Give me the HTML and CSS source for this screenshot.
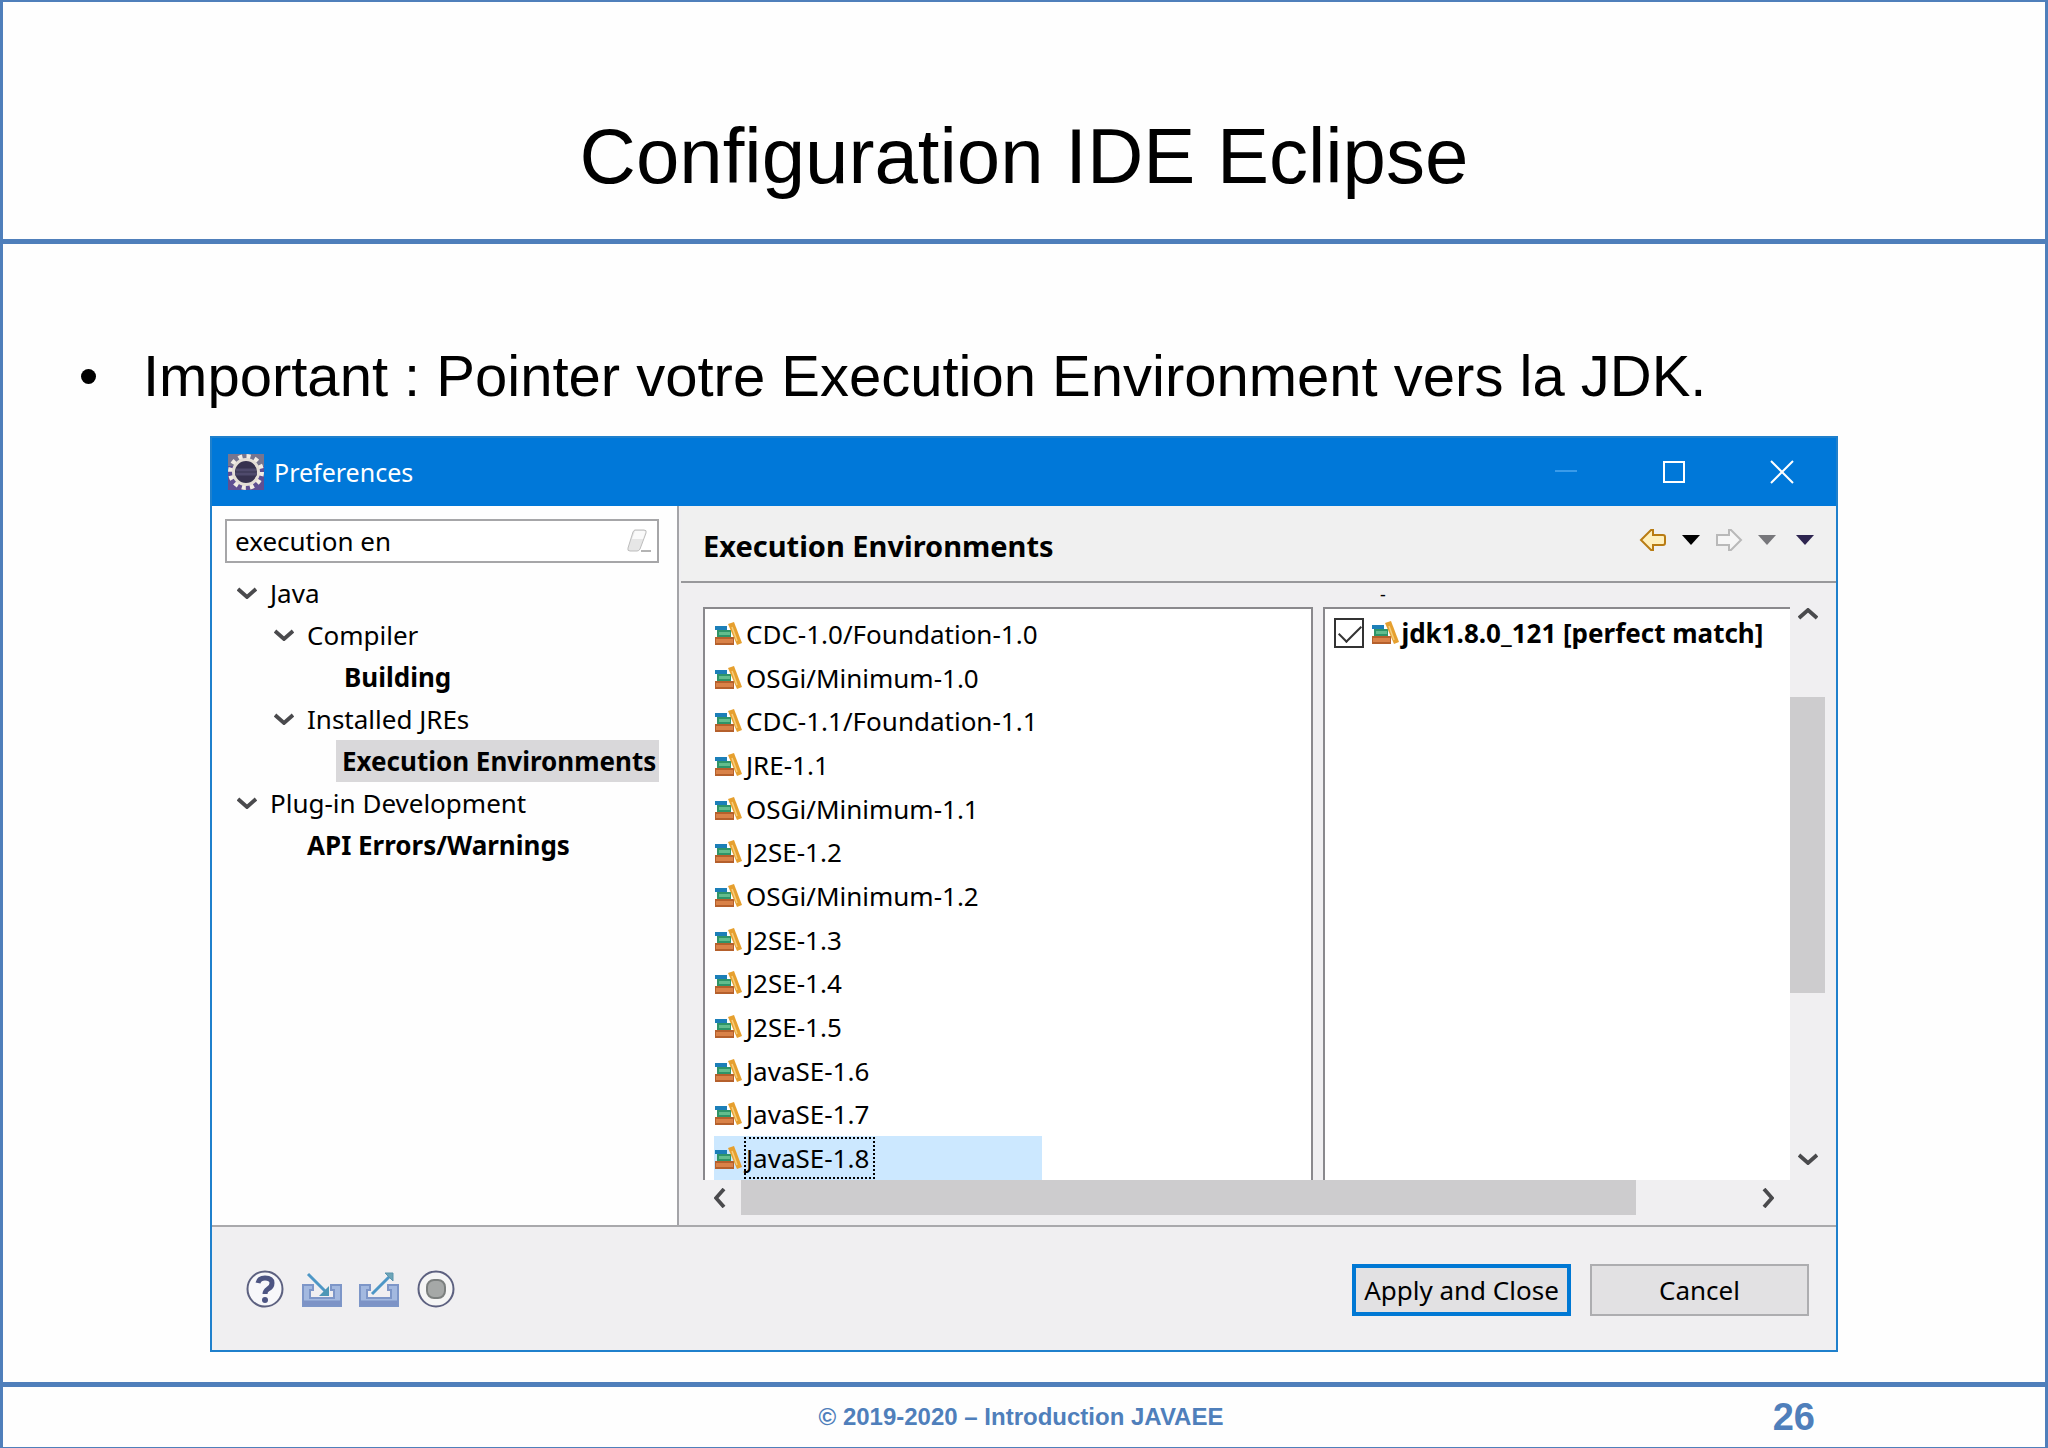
FILE: index.html
```html
<!DOCTYPE html>
<html lang="fr">

<head>
    <meta charset="UTF-8">
    <meta name="viewport" content="width=device-width, initial-scale=1.0">
    <title>Configuration IDE Eclipse</title>
    <link rel="stylesheet" href="styles.css">
</head>

<body>
    <!--Icones partagées-->
    <svg class="sprite" aria-hidden="true">
        <symbol id="books" viewBox="0 0 28 24">
            <path d="M1 4h12v4H1z" fill="#1c7fb8"/>
            <path d="M3 8h14v7H3z" fill="#2f9468"/>
            <path d="M5 10h11v3H5z" fill="#63bd8d"/>
            <path d="M1 15h19v8H1z" fill="#b5602c"/>
            <path d="M2 17h17v4H2z" fill="#d98248"/>
            <path d="M14 2l6-2 8 21-5 2z" fill="#e6a02f"/>
            <path d="M18 5l5 14" stroke="#f6cd7c" stroke-width="1.5"/>
        </symbol>
        <symbol id="chevron" viewBox="0 0 20 12">
            <path d="M1 2l9 8 9-8" fill="none" stroke="#4a4a4d" stroke-width="3.8"/>
        </symbol>
        <symbol id="triangle" viewBox="0 0 18 10">
            <path d="M0 0h18L9 10z" fill="currentColor"/>
        </symbol>
        <symbol id="tray" viewBox="0 0 42 36">
            <path d="M2 13h10v5H9v8h24v-8h-3v-5h10v21H2z" fill="#a3b9e0" stroke="#7d96c8" stroke-width="2"/>
            <path d="M2 31h38" stroke="#7d93c6" stroke-width="5"/>
        </symbol>
    </svg>

    <div class="slide">
        <header class="slide-header">
            <h1>Configuration IDE Eclipse</h1>
        </header>

        <main>
            <ul class="points">
                <li>Important : Pointer votre Execution Environment vers la JDK.</li>
            </ul>

            <section class="dialog" aria-label="Preferences">
                <div class="titlebar">
                    <svg class="logo" viewBox="0 0 36 36">
                        <path d="M0 0h36v36H0z" fill="#5f4f92"/>
                        <path d="M0 0h36v12H0z" fill="#77758f"/>
                        <circle cx="18" cy="18" r="15.5" fill="none" stroke="#f1ece4" stroke-width="5" stroke-dasharray="4 4.12"/>
                        <circle cx="18" cy="18" r="12.5" fill="#37324f" stroke="#e4ded6" stroke-width="3"/>
                        <path d="M8 16h20M7 20h22" stroke="#4f4a6c" stroke-width="3"/>
                    </svg>
                    <span class="name">Preferences</span>
                    <div class="controls">
                        <button type="button" aria-label="Minimize" disabled>
                            <svg viewBox="0 0 24 24"><path d="M1 11h22" stroke="#3a9bea" stroke-width="2"/></svg>
                        </button>
                        <button type="button" aria-label="Maximize">
                            <svg viewBox="0 0 24 24"><path d="M2 2h20v20H2z" fill="none" stroke="#fff" stroke-width="2"/></svg>
                        </button>
                        <button type="button" aria-label="Close">
                            <svg viewBox="0 0 24 24"><path d="M1 1l22 22M23 1L1 23" stroke="#fff" stroke-width="2"/></svg>
                        </button>
                    </div>
                </div>

                <div class="content">
                    <nav class="sidebar">
                        <div class="search">
                            <input type="text" value="execution en" aria-label="Filter">
                            <button type="button" aria-label="Clear">
                                <svg viewBox="0 0 26 24">
                                    <path d="M9 1h9q3 0 2 3l-6 16q-1 2-3 2H4q-3 0-2-3L7 3q1-2 2-2z" fill="#e6e6e6" stroke="#bdbdbd"/>
                                    <path d="M9 2h9q2 0 1 2l-2 6H6z" fill="#fafafa"/>
                                    <path d="M15 22h10" stroke="#b4b4b4" stroke-width="2"/>
                                </svg>
                            </button>
                        </div>
                        <ul class="tree">
                            <li><svg><use href="#chevron"/></svg><span>Java</span></li>
                            <li class="level2"><svg><use href="#chevron"/></svg><span>Compiler</span></li>
                            <li class="level3"><b>Building</b></li>
                            <li class="level2"><svg><use href="#chevron"/></svg><span>Installed JREs</span></li>
                            <li class="level3"><b class="current">Execution Environments</b></li>
                            <li><svg><use href="#chevron"/></svg><span>Plug-in Development</span></li>
                            <li class="level2"><b class="leaf">API Errors/Warnings</b></li>
                        </ul>
                    </nav>

                    <div class="page">
                        <div class="page-header">
                            <h2>Execution Environments</h2>
                            <div class="history">
                                <button type="button" aria-label="Back">
                                    <svg class="arrow" viewBox="0 0 28 24"><path d="M2 12L12 2h2v5h10q2 0 2 2v6q0 2-2 2H14v5h-2z" fill="#fff0bd" stroke="#b97c13" stroke-width="2"/></svg>
                                </button>
                                <button type="button" aria-label="Back history"><svg class="tri"><use href="#triangle"/></svg></button>
                                <button type="button" aria-label="Forward">
                                    <svg class="arrow" viewBox="0 0 28 24"><path d="M26 12L16 2h-2v5H2v10h12v5h2z" fill="#f6f6f6" stroke="#b9b9b9" stroke-width="2"/></svg>
                                </button>
                                <button type="button" aria-label="Forward history"><svg class="tri off"><use href="#triangle"/></svg></button>
                                <button type="button" class="menu" aria-label="Menu"><svg class="tri dark"><use href="#triangle"/></svg></button>
                            </div>
                        </div>

                        <div class="scroller">
                            <div class="view">
                                <span class="cut">-</span>
                                <div class="lists">
                                    <ul class="list environments">
                                        <li><svg><use href="#books"/></svg><span>CDC-1.0/Foundation-1.0</span></li>
                                        <li><svg><use href="#books"/></svg><span>OSGi/Minimum-1.0</span></li>
                                        <li><svg><use href="#books"/></svg><span>CDC-1.1/Foundation-1.1</span></li>
                                        <li><svg><use href="#books"/></svg><span>JRE-1.1</span></li>
                                        <li><svg><use href="#books"/></svg><span>OSGi/Minimum-1.1</span></li>
                                        <li><svg><use href="#books"/></svg><span>J2SE-1.2</span></li>
                                        <li><svg><use href="#books"/></svg><span>OSGi/Minimum-1.2</span></li>
                                        <li><svg><use href="#books"/></svg><span>J2SE-1.3</span></li>
                                        <li><svg><use href="#books"/></svg><span>J2SE-1.4</span></li>
                                        <li><svg><use href="#books"/></svg><span>J2SE-1.5</span></li>
                                        <li><svg><use href="#books"/></svg><span>JavaSE-1.6</span></li>
                                        <li><svg><use href="#books"/></svg><span>JavaSE-1.7</span></li>
                                        <li class="selected"><svg><use href="#books"/></svg><span>JavaSE-1.8</span></li>
                                    </ul>
                                    <div class="list jres">
                                        <label>
                                            <input type="checkbox" checked>
                                            <svg><use href="#books"/></svg>
                                            <b>jdk1.8.0_121 [perfect match]</b>
                                        </label>
                                    </div>
                                </div>
                            </div>
                            <div class="vbar">
                                <svg class="up"><use href="#chevron"/></svg>
                                <div class="track"><div class="thumb"></div></div>
                                <svg><use href="#chevron"/></svg>
                            </div>
                            <div class="hbar">
                                <svg class="left"><use href="#chevron"/></svg>
                                <div class="track"><div class="thumb"></div></div>
                                <svg class="right"><use href="#chevron"/></svg>
                            </div>
                        </div>
                    </div>
                </div>

                <div class="actions">
                    <div class="tools">
                        <button type="button" aria-label="Help">
                            <svg viewBox="0 0 42 40">
                                <circle cx="21" cy="20" r="17.5" fill="#f7f7fa" stroke="#5d6180" stroke-width="2"/>
                                <path d="M14 14q1-5 7-5 7 0 7 5 0 4-4 6-3 2-3 5" fill="none" stroke="#4d5583" stroke-width="5"/>
                                <circle cx="21" cy="31" r="3" fill="#4d5583"/>
                            </svg>
                        </button>
                        <button type="button" aria-label="Import">
                            <svg viewBox="0 0 42 40">
                                <use href="#tray" y="3" width="42" height="36"/>
                                <path d="M7 5l17 17" stroke="#4d97c6" stroke-width="3"/>
                                <path d="M28 17v10H18z" fill="#4d97b6"/>
                            </svg>
                        </button>
                        <button type="button" aria-label="Export">
                            <svg viewBox="0 0 42 40">
                                <use href="#tray" y="3" width="42" height="36"/>
                                <path d="M14 25L31 8" stroke="#4d97c6" stroke-width="3"/>
                                <path d="M27 4h8v8z" fill="#6ca5b8" stroke="#5b94ad"/>
                            </svg>
                        </button>
                        <button type="button" aria-label="Record">
                            <svg viewBox="0 0 42 40">
                                <circle cx="21" cy="20" r="17.5" fill="#f5f5f5" stroke="#5d6180" stroke-width="2"/>
                                <rect x="12" y="11" width="18" height="18" rx="7" fill="#a5a8a7" stroke="#7b7f7e" stroke-width="2"/>
                            </svg>
                        </button>
                    </div>
                    <button type="button" class="btn primary">Apply and Close</button>
                    <button type="button" class="btn">Cancel</button>
                </div>
            </section>
        </main>

        <footer>
            <span class="copyright">© 2019-2020 – Introduction JAVAEE</span>
            <span class="number">26</span>
        </footer>
    </div>
</body>

</html>
```

FILE: styles.css
```css
* {
    box-sizing: border-box;
}

body {
    margin: 0;
    font-family: "Liberation Sans", Arial, sans-serif;
    background-color: #fefefe;
    color: #000;
}

ul {
    list-style: none;
    margin: 0;
    padding: 0;
}

button {
    font: inherit;
    color: inherit;
    border: none;
    background: none;
    padding: 0;
}

svg {
    display: block;
    flex: none;
}

.sprite {
    position: absolute;
    width: 0;
    height: 0;
}

/*Diapositive*/
.slide {
    min-height: 100vh;
    display: flex;
    flex-direction: column;
    border: 3px solid #4f7fbb;
    border-width: 2px 3px;
}

.slide-header {
    padding: 109px 0 38px;
    border-bottom: 5px solid #4f7fbb;
    text-align: center;
}

h1 {
    margin: 0;
    font-size: 78px;
    line-height: 90px;
    font-weight: normal;
}

main {
    flex: 1;
    padding: 94px 207px 30px;
}

.points {
    margin: 0 -132px 22px;
}

.points li {
    display: flex;
    align-items: center;
    font-size: 58px;
    line-height: 76px;
}

.points li::before {
    content: "";
    width: 15px;
    height: 15px;
    margin-right: 47px;
    margin-left: 3px;
    border-radius: 50%;
    background-color: #000;
}

footer {
    display: grid;
    grid-template-columns: 1fr auto 1fr;
    align-items: center;
    height: 65px;
    border-top: 5px solid #4f7fbb;
    color: #4f7fbb;
    font-weight: bold;
}

.copyright {
    grid-column: 2;
    padding-right: 6px;
    font-size: 24px;
}

.number {
    justify-self: end;
    margin-right: 230px;
    font-size: 38px;
    line-height: 56px;
}

/*Fenêtre Preferences*/
.dialog {
    border: 2px solid #1f80cc;
    background-color: #f0eff1;
    font-family: "Noto Sans", "Open Sans", sans-serif;
    font-size: 26px;
    line-height: 42px;
}

.titlebar {
    display: flex;
    align-items: center;
    height: 68px;
    padding: 0 16px;
    background-color: #0078d9;
    color: #fff;
}

.logo {
    width: 36px;
    height: 36px;
    margin-right: 10px;
}

.name {
    font-size: 25px;
}

.controls {
    display: flex;
    margin-left: auto;
    gap: 84px;
    padding-right: 26px;

    svg {
        width: 24px;
        height: 24px;
    }
}

.content {
    display: flex;
    height: 721px;
    border-bottom: 2px solid #a9a9ac;
}

.sidebar {
    width: 467px;
    padding: 13px 18px 0 13px;
    background-color: #fefefe;
    border-right: 2px solid #a4a4a8;
}

.search {
    display: flex;
    align-items: center;
    height: 44px;
    padding-right: 5px;
    border: 2px solid #a6a6a8;
    background-color: #fff;

    input {
        flex: 1;
        min-width: 0;
        height: 40px;
        border: none;
        outline: none;
        padding: 0 8px;
        background: none;
        font: inherit;
    }

    svg {
        width: 26px;
        height: 24px;
    }
}

.tree {
    padding: 9px 0 0 12px;

    li {
        display: flex;
        align-items: center;
        height: 42px;
    }

    svg {
        width: 20px;
        height: 12px;
        margin-right: 13px;
    }

    .level2 {
        padding-left: 37px;
    }

    .level3 {
        padding-left: 99px;
    }

    b {
        flex: 1;
        padding-left: 8px;
        white-space: nowrap;
    }

    .leaf {
        padding-left: 33px;
    }

    .current {
        padding-left: 6px;
        background-color: #d9d8da;
    }
}

.page {
    flex: 1;
    min-width: 0;
    display: flex;
    flex-direction: column;
    margin-left: 2px;
}

.page-header {
    display: flex;
    align-items: center;
    justify-content: space-between;
    height: 77px;
    padding: 4px 22px 0;
    border-bottom: 2px solid #98989b;
    background-color: #f0f0f0;
}

h2 {
    margin: 0;
    font-size: 29px;
    line-height: 42px;
}

.history {
    display: flex;
    align-items: center;
    gap: 15px;
    padding-bottom: 12px;

    .arrow {
        width: 28px;
        height: 24px;
    }

    .tri {
        width: 18px;
        height: 10px;
    }

    .off {
        color: #77777b;
    }

    .dark {
        color: #2e2550;
    }

    .menu {
        margin-left: 5px;
    }
}

.scroller {
    flex: 1;
    display: grid;
    grid-template-columns: 1fr 35px;
    grid-template-rows: 1fr 35px;
    padding: 0 11px 10px 22px;
}

.view {
    display: flex;
    flex-direction: column;
}

.cut {
    height: 24px;
    margin-left: 677px;
    font-size: 18px;
    line-height: 22px;
}

.lists {
    flex: 1;
    display: grid;
    grid-template-columns: 611fr 467fr;
    gap: 10px;
}

.list {
    border: 2px solid #8a898d;
    border-bottom: none;
    background-color: #fff;
    white-space: nowrap;

    svg {
        width: 28px;
        height: 24px;
    }
}

.environments {
    display: grid;
    grid-auto-rows: 1fr;
    padding: 3px 9px 0;

    li {
        display: flex;
        align-items: center;
        width: 328px;
    }

    span {
        padding: 0 6px 0 2px;
        margin-left: 2px;
    }
}

.selected {
    background-color: #cce8ff;

    span {
        outline: 2px dotted #000;
        outline-offset: -2px;
    }
}

.jres {
    border-right: none;
    padding: 3px 9px 0;

    label {
        display: flex;
        align-items: center;
        height: 42px;
    }

    input {
        appearance: none;
        flex: none;
        width: 30px;
        height: 30px;
        margin: 0 7px 0 0;
        border: 2px solid #333;
        background-color: #fff;
    }

    input:checked::before {
        content: "";
        display: block;
        width: 20px;
        height: 10px;
        margin: 5px 3px;
        border: solid #333;
        border-width: 0 0 2px 2px;
        transform: rotate(-45deg);
    }

    b {
        margin-left: 2px;
    }
}

/*Barres de défilement*/
.vbar,
.hbar {
    display: flex;
    align-items: center;

    svg {
        width: 20px;
        height: 12px;
    }

    .track {
        flex: 1;
        display: flex;
    }

    .thumb {
        background-color: #cdccce;
    }
}

.vbar {
    flex-direction: column;
    padding: 25px 0 15px;

    .up {
        transform: rotate(180deg);
    }

    .track {
        width: 100%;
        flex-direction: column;
        padding-top: 77px;
    }

    .thumb {
        height: 65%;
    }
}

.hbar {
    padding: 0 12px 0 7px;

    .track {
        height: 100%;
        padding-left: 11px;
    }

    .thumb {
        width: 88%;
    }

    .left {
        transform: rotate(90deg);
    }

    .right {
        transform: rotate(-90deg);
    }
}

/*Boutons du bas*/
.actions {
    display: flex;
    align-items: center;
    gap: 19px;
    height: 123px;
    padding: 0 27px 0 32px;
}

.tools {
    display: flex;
    gap: 15px;
    margin-right: auto;

    svg {
        width: 42px;
        height: 40px;
    }
}

.btn {
    width: 219px;
    height: 52px;
    margin-top: 3px;
    border: 2px solid #adadb0;
    background-color: #e2e1e3;
    white-space: nowrap;
}

.primary {
    border: 4px solid #0078d4;
}
```
